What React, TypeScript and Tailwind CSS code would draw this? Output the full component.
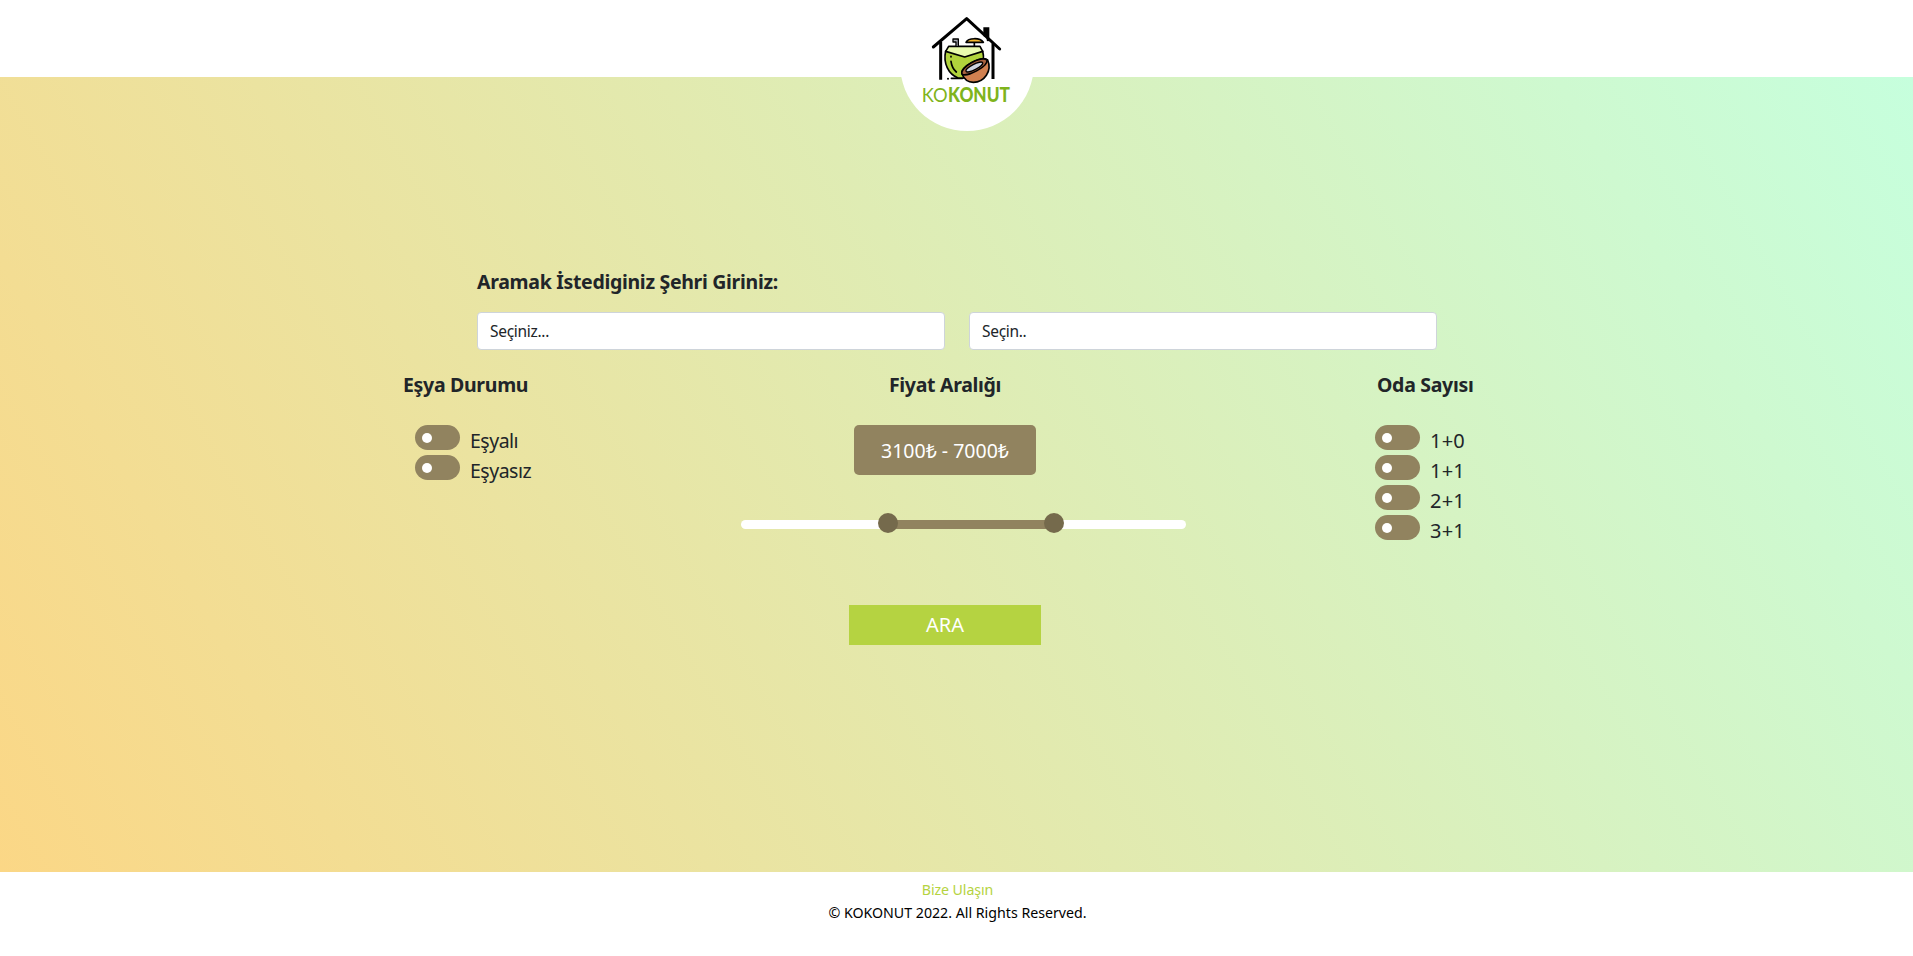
import React from "react";

function Logo() {
  return (
    <svg
      className="absolute left-[890px] top-0 h-[140px] w-[155px]"
      viewBox="0 0 465 420"
      strokeLinecap="round"
      strokeLinejoin="round"
    >
      <circle cx="231" cy="192" r="201" fill="#fff" />
      <path d="M284 106V86h10v34" fill="#000" stroke="#000" strokeWidth="8" strokeLinejoin="miter" />
      <path d="M130 141L230 56L329 147" fill="none" stroke="#000" strokeWidth="9" />
      <path d="M152 126V239M309 130V237" fill="none" stroke="#000" strokeWidth="9" strokeLinecap="butt" />
      <path d="M184 235h34" stroke="#000" strokeWidth="5" />
      <circle cx="174" cy="236" r="3" fill="#000" />
      <path d="M167 153C159 190 175 222 204 234H242C270 222 287 190 278 153Z" fill="#b1d33c" stroke="#000" strokeWidth="5" />
      <path d="M176 139H270L278 154L224 171L167 154Z" fill="#e9fbae" stroke="#000" strokeWidth="5" />
      <path d="M198 138V126H189V117H205V138" fill="#a8acb5" stroke="#000" strokeWidth="4" />
      <path d="M253 128V138" stroke="#000" strokeWidth="5" />
      <path d="M228 127C235 113 270 112 280 127Z" fill="#f5b82e" stroke="#000" strokeWidth="5" />
      <path d="M183 169V171M183 184C185 200 191 209 199 216" fill="none" stroke="#000" strokeWidth="5" />
      <path d="M216 222C208 202 274 166 293 180C307 213 283 247 250 247C235 247 222 237 216 222Z" fill="#d08050" stroke="#000" strokeWidth="5" />
      <path d="M216 222C208 202 274 166 291 180C296 199 228 234 216 222Z" fill="#a9623f" stroke="#000" strokeWidth="5" />
      <ellipse cx="253" cy="201" rx="28" ry="8" transform="rotate(-27 253 201)" fill="#cdd3df" stroke="#000" strokeWidth="4" />
      <g fill="#7fb41c" fontFamily="Lato, sans-serif" fontSize="60">
        <text x="95" y="305" fontWeight="400" textLength="78" lengthAdjust="spacingAndGlyphs">KO</text>
        <text x="174" y="305" fontWeight="900" textLength="186" lengthAdjust="spacingAndGlyphs">KONUT</text>
      </g>
    </svg>
  );
}

function Toggle({ children }: { children: React.ReactNode }) {
  return (
    <label className="flex h-[30px] cursor-pointer items-start">
      <span className="flex h-[25px] w-[45px] items-center rounded-full bg-[#91835f] pl-[7px]">
        <span className="h-[10px] w-[10px] rounded-full bg-white" />
      </span>
      <span className="ml-[10px] mt-[1px] whitespace-nowrap leading-[30px]">{children}</span>
    </label>
  );
}

function Title({ children }: { children: React.ReactNode }) {
  return <h2 className="whitespace-nowrap text-[19.5px] font-bold leading-[30px] tracking-[-0.31px]">{children}</h2>;
}

export default function App() {
  return (
    <div className="relative flex h-[956px] w-[1913px] flex-col overflow-hidden bg-white font-['Noto_Sans',sans-serif] text-[#212529]">
      <header className="h-[77px] shrink-0 bg-white" />
      <Logo />
      <main className="h-[795px] shrink-0 bg-[linear-gradient(60deg,#fbd786,#c6ffdd)] pt-[190px]">
        <section className="ml-[477px] w-[960px]">
          <Title>Aramak İstediginiz Şehri Giriniz:</Title>
          <div className="mt-[15px] flex gap-6">
            {["Seçiniz...", "Seçin.."].map((text) => (
              <div
                key={text}
                className="flex h-[38px] w-[468px] items-center rounded border border-[#ced4da] bg-white px-3 pt-[2px] text-[15.5px] tracking-[-0.3px]"
              >
                {text}
              </div>
            ))}
          </div>
        </section>
        <section className="mt-[20px] flex">
          <div className="ml-[403px] w-[338px]">
            <Title>Eşya Durumu</Title>
            <div className="ml-[12px] mt-[25px] text-[19.5px] tracking-[-0.5px]">
              <Toggle>Eşyalı</Toggle>
              <Toggle>Eşyasız</Toggle>
            </div>
          </div>
          <div className="w-[445px]">
            <div className="flex w-[408px] flex-col items-center">
              <Title>Fiyat Aralığı</Title>
              <div className="mt-[25px] flex h-[50px] w-[182px] items-center justify-center whitespace-nowrap rounded-[5px] bg-[#91835f] pt-[2px] text-[19.5px] text-white">
                3100₺ - 7000₺
              </div>
            </div>
            <div className="relative mt-[45px] h-[9px] rounded-full bg-white">
              <div className="absolute left-[147px] h-[9px] w-[166px] bg-[#91835f]" />
              <div className="absolute left-[137px] top-[-7px] h-5 w-5 rounded-full bg-[#756a4c]" />
              <div className="absolute left-[303px] top-[-7px] h-5 w-5 rounded-full bg-[#756a4c]" />
            </div>
            <button className="ml-[108px] mt-[76px] block h-[40px] w-[192px] bg-[#b5d341] text-[20px] text-white">
              ARA
            </button>
          </div>
          <div className="ml-[189px]">
            <div className="ml-[2px]">
              <Title>Oda Sayısı</Title>
            </div>
            <div className="mt-[25px] text-[20px] tracking-[0.2px]">
              {["1+0", "1+1", "2+1", "3+1"].map((t) => (
                <Toggle key={t}>{t}</Toggle>
              ))}
            </div>
          </div>
        </section>
      </main>
      <footer className="flex flex-col items-center pl-[2px] pt-[6px] text-[14.2px] leading-[23px] text-black">
        <a className="tracking-[-0.1px] text-[#b5d341]">Bize Ulaşın</a>
        <p className="whitespace-nowrap">© KOKONUT 2022. All Rights Reserved.</p>
      </footer>
    </div>
  );
}
